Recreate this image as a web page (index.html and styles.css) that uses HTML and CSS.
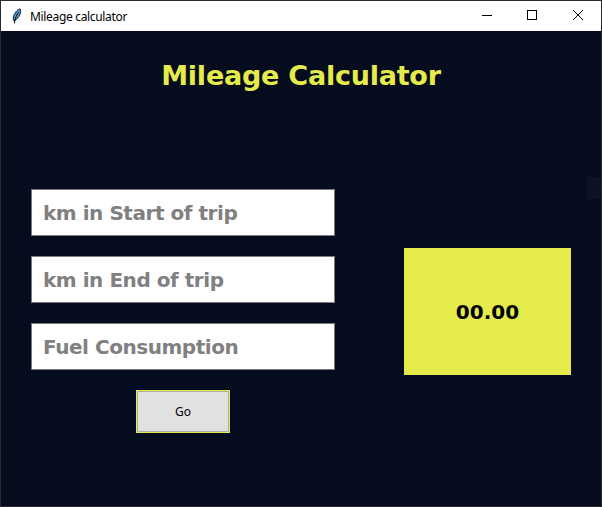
FILE: index.html
```html
<!DOCTYPE html>
<html lang="en"><head><meta charset="utf-8"><title>Mileage calculator</title><link rel="stylesheet" href="styles.css"></head>
<body>
<div class="window">
<header class="titlebar">
<svg class="feather" width="16" height="16" viewBox="0 0 16 16"><path d="M4.500 12.500C3.500 8 6.500 2.500 11 .8C12.800 4 10.500 9.500 6 12.500Z" fill="#5b93cc" stroke="#1a2233" stroke-width="1"/><path d="M5.500 15.500C5.500 12 7 8 9.500 4" stroke="#111" stroke-width="1" fill="none"/></svg>
<span class="caption">Mileage calculator</span>
<div class="controls">
<svg width="46" height="30"><path d="M19 14.500h10" /></svg>
<svg width="46" height="30"><rect x="18.500" y="9.500" width="9" height="9"/></svg>
<svg width="46" height="30"><path d="M18 9l10 10M28 9l-10 10"/></svg>
</div>
</header>
<main class="client">
<h1>Mileage Calculator</h1>
<div class="content">
<form class="form">
<div class="field">km in Start of trip</div>
<div class="field">km in End of trip</div>
<div class="field">Fuel Consumption</div>
<button class="go" type="button">Go</button>
</form>
<output class="result">00.00</output>
<i class="patch"></i>
</div>
</main>
</div>
</body></html>
```
FILE: styles.css
```css
* { box-sizing: border-box; }
body { margin: 0; }
.window { width: 602px; height: 507px; border: 1px solid #292c31; background: #050c1e; overflow: hidden; }
.titlebar { height: 30px; background: #fff; display: flex; align-items: center; }
.feather { margin: -1px 0 0 8px; }
.caption { margin-left: 5px; font: 12px "Noto Sans", sans-serif; letter-spacing: -.33px; color: #000; }
.controls { display: flex; margin-left: auto; }
.controls svg { fill: none; stroke: #000; stroke-width: 1; }
.client { font-family: "DejaVu Sans", sans-serif; }
h1 { margin: 0; height: 158px; padding-top: 28px; text-align: center; font-size: 27px; line-height: 34px; letter-spacing: -.23px; color: #e6eb4c; }
.content { display: flex; position: relative; padding-left: 30px; }
.form { width: 304px; display: flex; flex-direction: column; gap: 20px; }
.field { height: 47px; border: 1px solid #7a7a7a; background: #fff; color: #808080; font-size: 20px; font-weight: bold; line-height: 46px; letter-spacing: -.46px; padding-left: 11px; }
.go { width: 94px; height: 43px; align-self: center; border: 1px solid #e6eb4c; background: #e1e1e1; font: 12px "Noto Sans", sans-serif; color: #000; padding: 0; box-shadow: inset 0 0 0 1px #adadad; }
.result { width: 167px; height: 127px; margin: 59px 0 0 69px; background: #e6eb4c; color: #000; font-size: 20px; font-weight: bold; line-height: 129px; text-align: center; }
.patch { position: absolute; right: 0; top: -12px; width: 14px; height: 22px; background: #0b1226; }
```
